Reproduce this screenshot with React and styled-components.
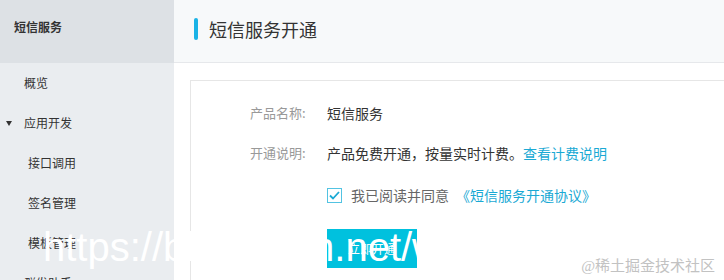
import React from 'react';
import styled, { createGlobalStyle } from 'styled-components';

const GlobalStyle = createGlobalStyle`
    html, body {
        margin: 0;
        padding: 0;
        background: #ffffff;
    }
    * {
        box-sizing: border-box;
    }
`;

const Page = styled.div`
    position: relative;
    display: flex;
    width: 100%;
    height: 100vh;
    overflow: hidden;
    font-family: 'Noto Sans CJK SC', 'Noto Sans', sans-serif;
    color: #333333;
`;

const Sidebar = styled.div`
    width: 174px;
    flex-shrink: 0;
    display: flex;
    flex-direction: column;
    background: #eaedf0;
`;

const SideHeader = styled.div`
    flex-shrink: 0;
    height: 63px;
    padding: 18px 0 0 14px;
    background: #dde1e5;
    font-size: 12px;
    font-weight: 700;
    line-height: 18px;
    color: #333333;
`;

const MenuItem = styled.div`
    position: relative;
    flex-shrink: 0;
    height: 40px;
    display: flex;
    align-items: center;
    padding-left: ${p => p.$indent}px;
    font-size: 12px;
    line-height: 18px;
    color: #333333;
`;

const Caret = styled.span`
    position: absolute;
    left: 6px;
    top: 18px;
    width: 0;
    height: 0;
    border-left: 3.5px solid transparent;
    border-right: 3.5px solid transparent;
    border-top: 5px solid #333333;
`;

const Main = styled.div`
    flex: 1;
    display: flex;
    flex-direction: column;
    background: #ffffff;
`;

const MainHeader = styled.div`
    flex-shrink: 0;
    height: 63px;
    display: flex;
    align-items: center;
    padding: 0 0 5px 20px;
    background: #f7f9fa;
    border-bottom: 1px solid #e6e8eb;
`;

const TitleBar = styled.span`
    width: 4px;
    height: 22px;
    border-radius: 2px;
    background: #1ab3e6;
    margin-right: 11px;
`;

const Title = styled.div`
    font-size: 18px;
    line-height: 24px;
    color: #333333;
`;

const Body = styled.div`
    flex: 1;
    padding: 17px 0 0 16px;
`;

const Card = styled.div`
    height: 100%;
    border-top: 1px solid #e6e6e6;
    border-left: 1px solid #e6e6e6;
    padding: 12px 0 0 59px;
`;

const Row = styled.div`
    height: 40px;
    display: flex;
    align-items: center;
`;

const Label = styled.span`
    width: 77px;
    font-size: 13px;
    line-height: 18px;
    color: #999999;
`;

const Value = styled.span`
    font-size: 14px;
    line-height: 20px;
    color: #333333;
`;

const Link = styled.a`
    font-size: 14px;
    line-height: 20px;
    color: #1aa9d4;
    text-decoration: none;
    margin-left: ${p => p.$gap || 0}px;
`;

const AgreeRow = styled(Row)`
    margin-top: 2px;
    padding-left: 77px;
`;

const Check = styled.span`
    width: 15px;
    height: 15px;
    border: 1px solid #52c3e2;
    background: #ffffff;
    display: flex;
    align-items: center;
    justify-content: center;
    margin-right: 9px;
`;

const AgreeText = styled.span`
    font-size: 14px;
    line-height: 20px;
    color: #666666;
`;

const ButtonRow = styled.div`
    margin-top: 14px;
    padding-left: 77px;
`;

const Button = styled.button`
    width: 90px;
    height: 39px;
    border: none;
    background: #00c1de;
    color: #ffffff;
    font-family: 'Noto Sans CJK SC', sans-serif;
    font-size: 12px;
    padding: 0;
    cursor: pointer;
`;

const Watermark = styled.div`
    position: absolute;
    left: 43px;
    top: 227px;
    font-family: 'Liberation Sans', Arial, sans-serif;
    font-size: 40px;
    line-height: 40px;
    color: #ffffff;
    white-space: nowrap;
    pointer-events: none;
`;

const SiteMark = styled.div`
    position: absolute;
    right: 9px;
    bottom: 3px;
    font-family: 'Liberation Serif', 'Noto Sans CJK SC', serif;
    font-size: 15px;
    line-height: 22px;
    color: #c2c2c2;
    pointer-events: none;
`;

const menu = [
    { text: '概览', indent: 24 },
    { text: '应用开发', indent: 24, caret: true },
    { text: '接口调用', indent: 28 },
    { text: '签名管理', indent: 28 },
    { text: '模板管理', indent: 28 },
    { text: '群发助手', indent: 24, caret: true },
];

export default function App() {
    return (
        <Page>
            <GlobalStyle />
            <Sidebar>
                <SideHeader>短信服务</SideHeader>
                {menu.map(item => (
                    <MenuItem key={item.text} $indent={item.indent}>
                        {item.caret && <Caret />}
                        {item.text}
                    </MenuItem>
                ))}
            </Sidebar>

            <Main>
                <MainHeader>
                    <TitleBar />
                    <Title>短信服务开通</Title>
                </MainHeader>

                <Body>
                    <Card>
                        <Row>
                            <Label>产品名称:</Label>
                            <Value>短信服务</Value>
                        </Row>
                        <Row>
                            <Label>开通说明:</Label>
                            <Value>产品免费开通，按量实时计费。</Value>
                            <Link href="#">查看计费说明</Link>
                        </Row>
                        <AgreeRow>
                            <Check>
                                <svg width="11" height="9" viewBox="0 0 11 9">
                                    <path d="M1 4.5 L4 7.5 L10 1" fill="none" stroke="#1aa9d4" strokeWidth="1.8" />
                                </svg>
                            </Check>
                            <AgreeText>我已阅读并同意</AgreeText>
                            <Link href="#" $gap={7}>《短信服务开通协议》</Link>
                        </AgreeRow>
                        <ButtonRow>
                            <Button>立即开通</Button>
                        </ButtonRow>
                    </Card>
                </Body>
            </Main>

            <Watermark>https://blog.csdn.net/weixin</Watermark>
            <SiteMark>@稀土掘金技术社区</SiteMark>
        </Page>
    );
}
